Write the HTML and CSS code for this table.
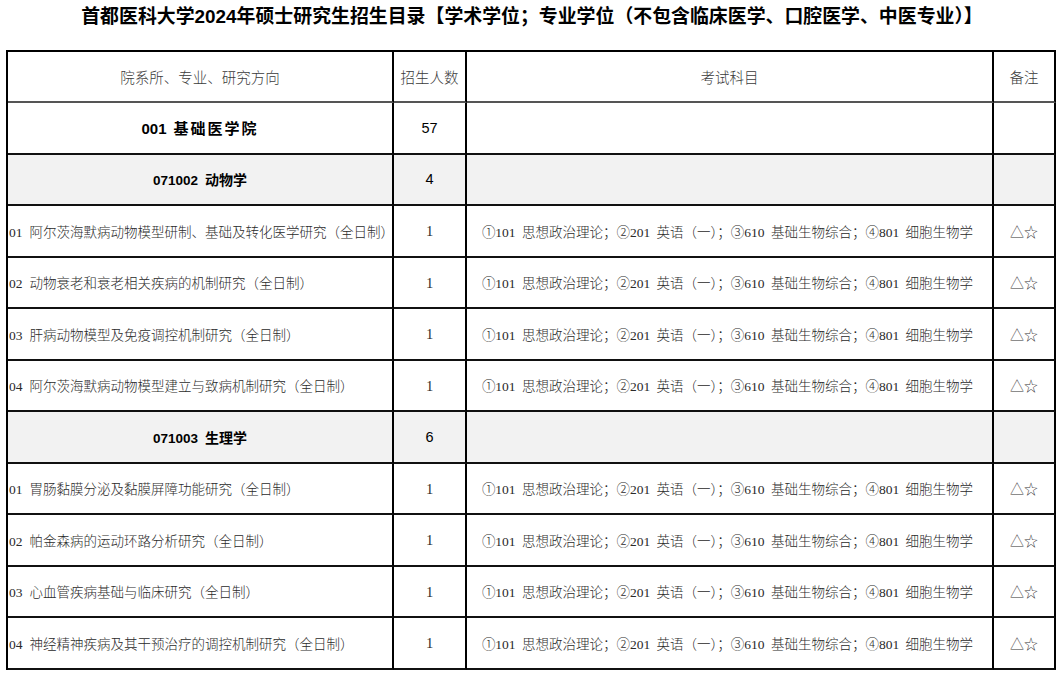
FILE: index.html
```html
<!DOCTYPE html>
<html lang="zh-CN">
<head>
<meta charset="utf-8">
<title>首都医科大学2024年硕士研究生招生目录</title>
<link rel="stylesheet" href="styles.css">
</head>
<body>
<h1 class="title">首都医科大学2024年硕士研究生招生目录【学术学位；专业学位（不包含临床医学、口腔医学、中医专业）】</h1>
<table class="catalog">
  <colgroup>
    <col class="c-name">
    <col class="c-num">
    <col class="c-exam">
    <col class="c-note">
  </colgroup>
  <tr class="head">
    <td>院系所、专业、研究方向</td>
    <td>招生人数</td>
    <td>考试科目</td>
    <td>备注</td>
  </tr>
  <tr class="school">
    <td><span class="code">001</span><span class="kai">基础医学院</span></td>
    <td class="bignum">57</td>
    <td></td>
    <td></td>
  </tr>
  <tr class="major">
    <td><span class="code">071002</span>动物学</td>
    <td class="bignum">4</td>
    <td></td>
    <td></td>
  </tr>
  <tr class="dir">
    <td class="name"><span class="no">01</span>阿尔茨海默病动物模型研制、基础及转化医学研究（全日制）</td>
    <td class="num">1</td>
    <td class="exam">①101 思想政治理论；②201 英语（一）；③610 基础生物综合；④801 细胞生物学</td>
    <td class="note">△☆</td>
  </tr>
  <tr class="dir">
    <td class="name"><span class="no">02</span>动物衰老和衰老相关疾病的机制研究（全日制）</td>
    <td class="num">1</td>
    <td class="exam">①101 思想政治理论；②201 英语（一）；③610 基础生物综合；④801 细胞生物学</td>
    <td class="note">△☆</td>
  </tr>
  <tr class="dir">
    <td class="name"><span class="no">03</span>肝病动物模型及免疫调控机制研究（全日制）</td>
    <td class="num">1</td>
    <td class="exam">①101 思想政治理论；②201 英语（一）；③610 基础生物综合；④801 细胞生物学</td>
    <td class="note">△☆</td>
  </tr>
  <tr class="dir">
    <td class="name"><span class="no">04</span>阿尔茨海默病动物模型建立与致病机制研究（全日制）</td>
    <td class="num">1</td>
    <td class="exam">①101 思想政治理论；②201 英语（一）；③610 基础生物综合；④801 细胞生物学</td>
    <td class="note">△☆</td>
  </tr>
  <tr class="major">
    <td><span class="code">071003</span>生理学</td>
    <td class="bignum">6</td>
    <td></td>
    <td></td>
  </tr>
  <tr class="dir">
    <td class="name"><span class="no">01</span>胃肠黏膜分泌及黏膜屏障功能研究（全日制）</td>
    <td class="num">1</td>
    <td class="exam">①101 思想政治理论；②201 英语（一）；③610 基础生物综合；④801 细胞生物学</td>
    <td class="note">△☆</td>
  </tr>
  <tr class="dir">
    <td class="name"><span class="no">02</span>帕金森病的运动环路分析研究（全日制）</td>
    <td class="num">1</td>
    <td class="exam">①101 思想政治理论；②201 英语（一）；③610 基础生物综合；④801 细胞生物学</td>
    <td class="note">△☆</td>
  </tr>
  <tr class="dir">
    <td class="name"><span class="no">03</span>心血管疾病基础与临床研究（全日制）</td>
    <td class="num">1</td>
    <td class="exam">①101 思想政治理论；②201 英语（一）；③610 基础生物综合；④801 细胞生物学</td>
    <td class="note">△☆</td>
  </tr>
  <tr class="dir">
    <td class="name"><span class="no">04</span>神经精神疾病及其干预治疗的调控机制研究（全日制）</td>
    <td class="num">1</td>
    <td class="exam">①101 思想政治理论；②201 英语（一）；③610 基础生物综合；④801 细胞生物学</td>
    <td class="note">△☆</td>
  </tr>
</table>
</body>
</html>
```
FILE: styles.css
```css
html, body {
  margin: 0;
  padding: 0;
  background: #fff;
}
body {
  font-family: "Liberation Serif", "Noto Sans CJK SC", serif;
  color: #222;
}
.title {
  margin: 0;
  padding-top: 6px;
  padding-left: 2px;
  height: 44px;
  line-height: 22px;
  font-family: "Liberation Sans", "Noto Sans CJK SC", sans-serif;
  font-size: 18.9px;
  font-weight: bold;
  color: #000;
  text-align: center;
  white-space: nowrap;
}
.catalog {
  margin-left: 6px;
  width: 1050px;
  table-layout: fixed;
  border-collapse: separate;
  border-spacing: 0;
  border-top: 2px solid #000;
  border-left: 2px solid #000;
}
.c-name { width: 386px; }
.c-num { width: 73px; }
.c-exam { width: 527px; }
.c-note { width: 62px; }
.catalog td {
  box-sizing: border-box;
  height: 51.5px;
  padding: 0;
  border-right: 2px solid #000;
  border-bottom: 2px solid #111;
  text-align: center;
  vertical-align: middle;
  white-space: nowrap;
  overflow: hidden;
}
.head td {
  height: 51px;
  font-family: "Liberation Serif", "Noto Sans CJK SC", serif;
  font-size: 14.5px;
  font-weight: 300;
  color: #3a3a3a;
  border-bottom-color: #555;
}
.school td,
.major td {
  font-family: "Liberation Sans", "Noto Sans CJK SC", sans-serif;
  font-weight: bold;
  color: #000;
}
.school td {
  font-size: 15px;
}
.major td {
  background: #f2f2f2;
  font-size: 14px;
}
.code {
  margin-right: 7px;
}
.major .code {
  font-size: 13.5px;
}
.kai {
  letter-spacing: 2px;
}
.bignum {
  font-weight: normal !important;
  font-size: 14.5px !important;
}
.dir td {
  font-size: 13.5px;
  font-weight: 300;
  color: #2a2a2a;
}
.dir .name {
  text-align: left;
  padding-left: 1px;
}
.no {
  margin-right: 7px;
}
.dir .num {
  font-size: 14.5px;
  font-weight: normal;
  padding-top: 2px;
}
.dir .exam {
  text-align: center;
  padding-right: 4px;
  word-spacing: 3px;
}
.dir .note {
  font-size: 14px;
  color: #333;
}
```
